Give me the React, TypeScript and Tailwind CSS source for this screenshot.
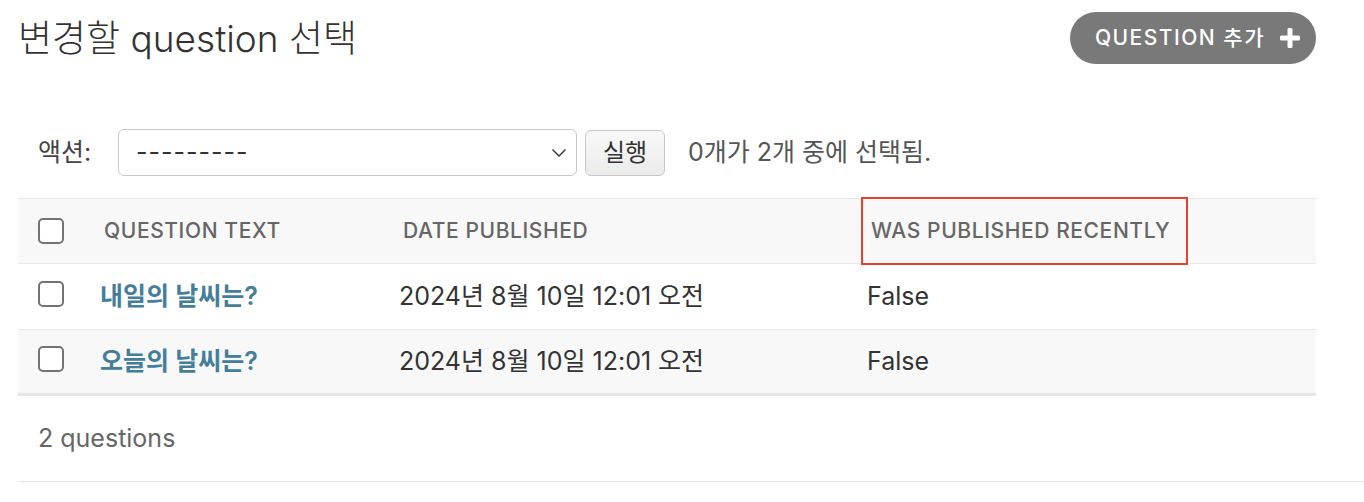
const font = "font-['Inter','Noto_Sans_CJK_KR',sans-serif]";

function Checkbox() {
  return <span className="block w-[26px] h-[26px] rounded-[5px] border-2 border-[#737373] bg-white" />;
}

function PlusIcon() {
  return (
    <svg width="20" height="20" viewBox="0 0 20 20" className="shrink-0">
      <rect x="7.5" y="0" width="5" height="20" rx="1.5" fill="white" />
      <rect x="0" y="7.5" width="20" height="5" rx="1.5" fill="white" />
    </svg>
  );
}

function Chevron() {
  return (
    <svg width="16" height="10" viewBox="0 0 16 10" className="shrink-0">
      <polyline points="1.5,1.5 8,8 14.5,1.5" fill="none" stroke="#333" strokeWidth="1.4" />
    </svg>
  );
}

const rows = [
  { text: '내일의 날씨는?', date: '2024년 8월 10일 12:01 오전', recent: 'False' },
  { text: '오늘의 날씨는?', date: '2024년 8월 10일 12:01 오전', recent: 'False' },
];

const cols = 'grid grid-cols-[66px_299px_468px_1fr]';

export default function App() {
  return (
    <div className={`w-[1364px] h-[502px] overflow-hidden bg-white text-[#333] ${font}`}>
      <div className="pl-[18px]">
        {/* title + add button */}
        <div className="flex items-start justify-between pr-[48px] pt-[12px] h-[110px]">
          <h1 className="mt-[3px] text-[37px] font-light leading-[48px] text-[#333]">
            변경할 question 선택
          </h1>
          <button className="flex items-center gap-[15px] h-[52px] pl-[25px] pr-[16px] rounded-full bg-[#797979] text-white text-[21px] font-medium tracking-[1.5px] uppercase">
            <span>QUESTION 추가</span>
            <PlusIcon />
          </button>
        </div>

        {/* actions */}
        <div className="flex items-center h-[47px] mt-[19px] pl-[20px] text-[25px]">
          <span className="text-[#444] w-[80px]">액션:</span>
          <div className="flex items-center justify-between w-[459px] h-[47px] pl-[17px] pr-[9px] border border-[#c8c8c8] rounded-[6px] bg-white">
            <span className="text-[#333] tracking-[1px]">---------</span>
            <Chevron />
          </div>
          <button className="ml-[8px] w-[80px] h-[46px] border border-[#c8c8c8] rounded-[6px] bg-gradient-to-b from-[#f8f8f8] to-[#ebebeb] text-[#333] text-[24px]">
            실행
          </button>
          <span className="ml-[23px] text-[#555]">0개가 2개 중에 선택됨.</span>
        </div>

        {/* table */}
        <div className="mt-[22px] w-[1298px]">
          <div className={`${cols} relative h-[66px] items-center bg-[#f8f8f8] border-t border-b border-[#e8e8e8] text-[21px] text-[#666] uppercase tracking-[0.6px] font-medium`}>
            <div className="pl-[20px]"><Checkbox /></div>
            <div className="pl-[20px]">Question text</div>
            <div className="pl-[20px]">Date published</div>
            <div className="pl-[20px]">Was published recently</div>
            <span className="absolute left-[843px] top-[-2px] w-[327px] h-[68px] border-2 border-[#e5412d]" />
          </div>
          {rows.map((r, i) => (
            <div
              key={r.text}
              className={`${cols} h-[66px] items-center text-[25px] ${i % 2 ? 'bg-[#f8f8f8] border-b-[3px] border-[#e6e6e6]' : 'bg-white border-b border-[#e8e8e8]'}`}
            >
              <div className="pl-[20px] -mt-[5px]"><Checkbox /></div>
              <div className="pl-[16px] text-[#447e9b] font-semibold">{r.text}</div>
              <div className="pl-[16px]">{r.date}</div>
              <div className="pl-[16px]">{r.recent}</div>
            </div>
          ))}
        </div>

        {/* paginator */}
        <div className="flex items-center h-[86px] pl-[20px] border-b border-[#e6e6e6] text-[25px] text-[#666]">
          2 questions
        </div>
      </div>
    </div>
  );
}
